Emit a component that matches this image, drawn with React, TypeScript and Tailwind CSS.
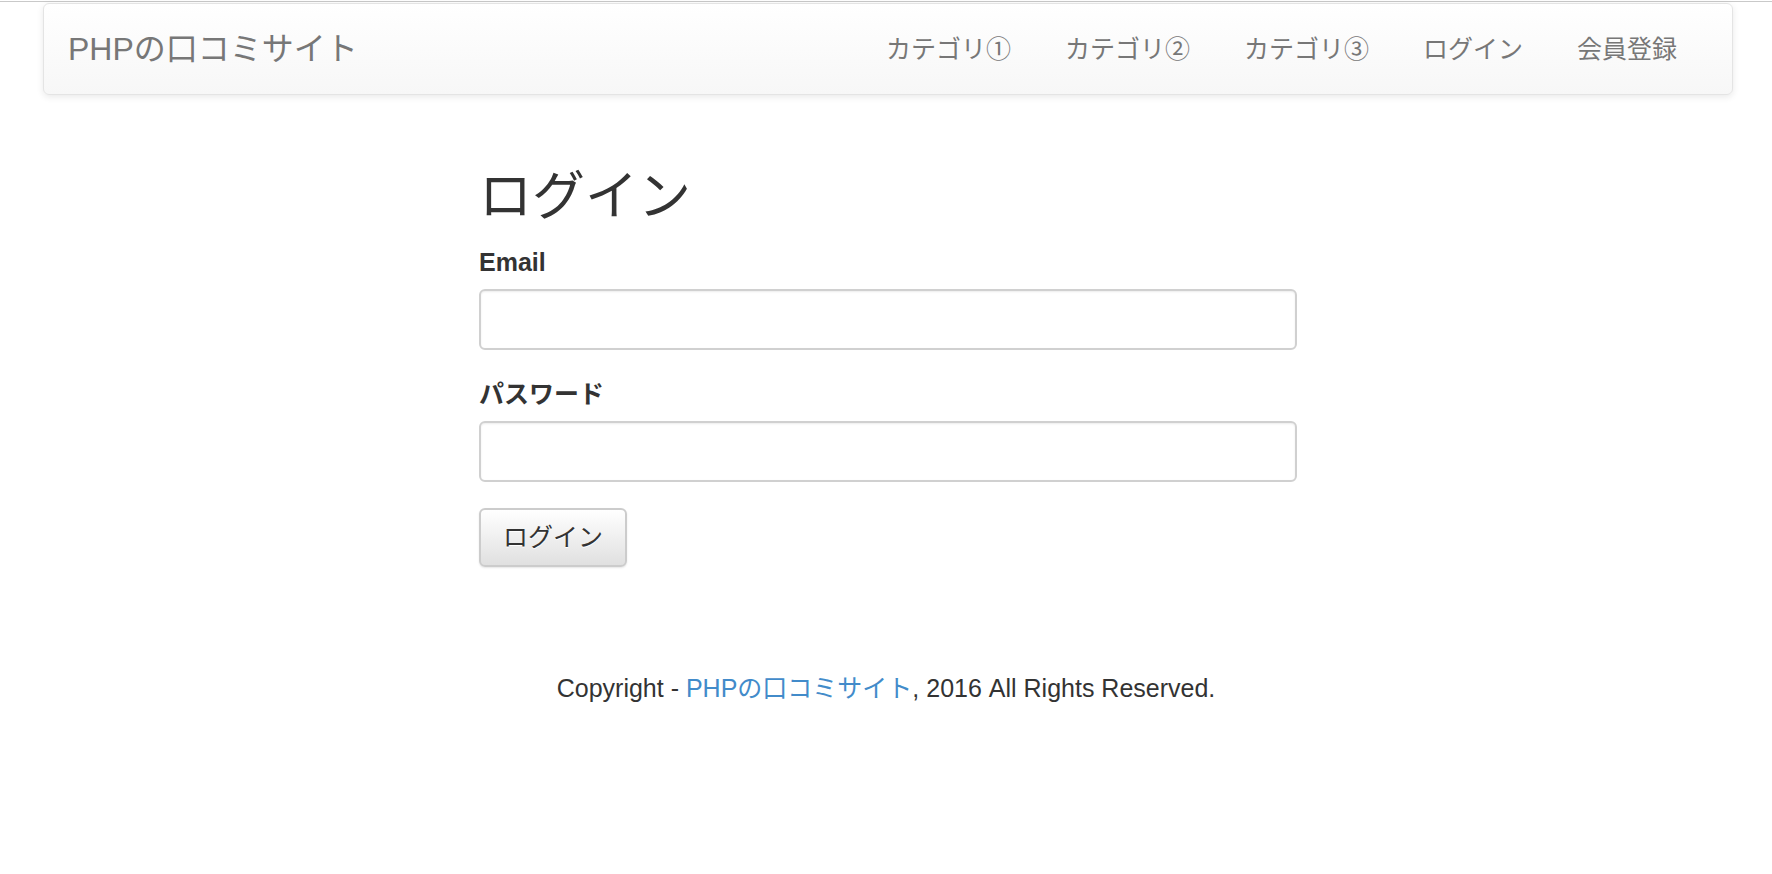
import React from "react";

const navItems = ["カテゴリ①", "カテゴリ②", "カテゴリ③", "ログイン", "会員登録"];

export default function App() {
  return (
    <div
      className="min-h-screen bg-white text-[#333]"
      style={{ fontFamily: '"Liberation Sans", "Noto Sans CJK JP", sans-serif' }}
    >
      {/* top hairline */}
      <div className="h-px" />
      <div className="h-px bg-[#c9c9c9]" />

      {/* NAVBAR */}
      <div className="pl-[43px] pr-[39px] pt-px">
        <nav className="h-[92px] flex items-center justify-between rounded-[6px] border border-[#e4e4e4] bg-gradient-to-b from-white to-[#f7f7f7] shadow-[0_2px_7px_rgba(0,0,0,0.09)] pl-[24px] pr-[28px]">
          <a className="text-[32px] text-[#777] leading-none">PHPの口コミサイト</a>
          <ul className="flex items-center">
            {navItems.map((item) => (
              <li key={item} className="px-[27px] text-[25px] text-[#777] leading-none">
                {item}
              </li>
            ))}
          </ul>
        </nav>
      </div>

      {/* LOGIN FORM */}
      <main className="pl-1">
        <div className="w-[818px] mx-auto">
          <h1 className="mt-[73px] text-[53px] leading-[58px] font-normal text-[#333]">ログイン</h1>

          <label className="block mt-[19px] mb-[10px] text-[25px] leading-[34px] font-bold">Email</label>
          <input
            type="email"
            className="block w-full h-[61px] rounded-[6px] border-2 border-[#d0d0d0] bg-white shadow-[inset_0_1px_2px_rgba(0,0,0,0.08)] px-4 text-[25px] outline-none"
          />

          <label className="block mt-[27px] mb-[10px] text-[25px] leading-[34px] font-bold">パスワード</label>
          <input
            type="password"
            className="block w-full h-[61px] rounded-[6px] border-2 border-[#d0d0d0] bg-white shadow-[inset_0_1px_2px_rgba(0,0,0,0.08)] px-4 text-[25px] outline-none"
          />

          <button className="mt-[26px] h-[59px] px-[22px] rounded-[6px] border-2 border-[#cccccc] bg-gradient-to-b from-white to-[#e0e0e0] text-[25px] text-[#333] shadow-[0_1px_2px_rgba(0,0,0,0.1)] [text-shadow:0_1px_0_#fff]">
            ログイン
          </button>
        </div>
      </main>

      {/* FOOTER */}
      <footer className="mt-[104px] text-center text-[25px] leading-[34px] text-[#333]">
        Copyright - <a className="text-[#428bca]">PHPの口コミサイト</a>, 2016 All Rights Reserved.
      </footer>
    </div>
  );
}
